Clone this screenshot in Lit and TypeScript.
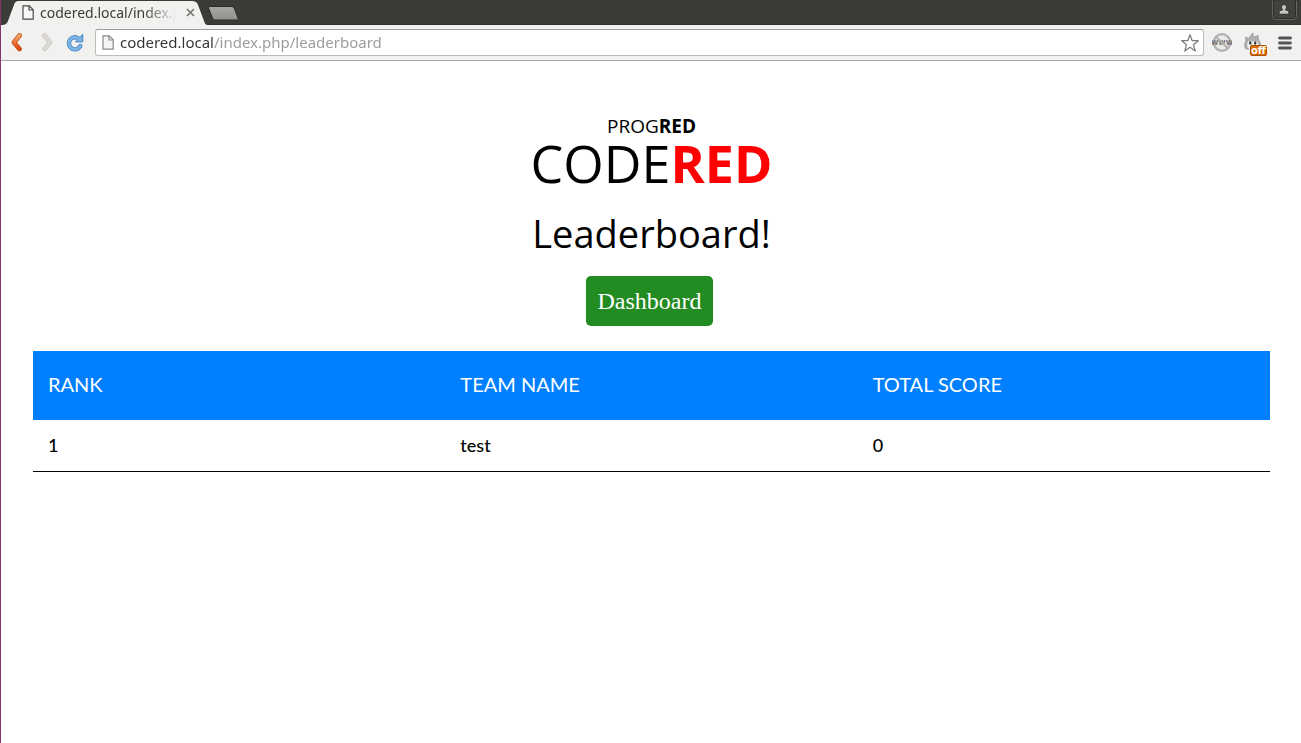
import { LitElement, html, css } from "lit";
import { customElement, property } from "lit/decorators.js";

const pageIcon = (stroke: string, fill: string) => html`
  <svg class="page-icon" viewBox="0 0 12 15" width="12" height="15" aria-hidden="true">
    <path d="M1 .8h6.2l4 4v9.4H1z" fill=${fill} stroke=${stroke} stroke-width="1.2" />
    <path d="M7 .8v4.2h4.2" fill="none" stroke=${stroke} stroke-width="1.2" />
  </svg>`;

@customElement("browser-tabs")
class BrowserTabs extends LitElement {
  @property() label = "";

  static styles = css`
    :host {
      display: block;
      background: #3c3b37;
      font-family: "Noto Sans", "Open Sans", sans-serif;
    }
    .strip {
      display: flex;
      height: 25px;
      align-items: flex-start;
      box-shadow: inset 0 -1px #33322e;
    }
    .tab {
      position: relative;
      display: flex;
      align-items: center;
      width: 207px;
      height: 25px;
      padding: 0 11px 0 21px;
      box-sizing: border-box;
    }
    .shape {
      position: absolute;
      inset: 0;
    }
    .page-icon {
      position: relative;
      flex: none;
    }
    .title {
      position: relative;
      flex: 1;
      margin: 0 9px 0 6px;
      overflow: hidden;
      white-space: nowrap;
      font-size: 14px;
      line-height: 24px;
      color: #3c3b37;
      mask-image: linear-gradient(to right, #000 104px, transparent 136px);
    }
    button {
      position: relative;
      flex: none;
      display: flex;
      padding: 0;
      border: 0;
      background: none;
    }
    .close {
      margin-right: 2px;
    }
    .new {
      margin-top: 6px;
    }
    .user {
      margin: 1px 4px 0 auto;
    }
  `;

  render() {
    return html`
      <div class="strip">
        <div class="tab">
          <svg class="shape" width="207" height="25" viewBox="0 0 208 25" preserveAspectRatio="none" aria-hidden="true">
            <path d="M0 25c4 0 6-1 7-4l6-16c1-3 2-4 5-4h174c3 0 5 1 6 4l6 16c1 3 2 4 4 4z" fill="#f2f1f0" />
          </svg>
          ${pageIcon("#4a4a48", "#f7f7f7")}
          <span class="title">${this.label}</span>
          <button class="close" aria-label="Close tab">
            <svg width="9" height="9" viewBox="0 0 9 9">
              <path d="M1 1l7 7M8 1l-7 7" stroke="#777572" stroke-width="1.6" />
            </svg>
          </button>
        </div>
        <button class="new" aria-label="New tab">
          <svg width="31" height="15" viewBox="0 0 31 15">
            <defs>
              <linearGradient id="g" x2="0" y2="1">
                <stop stop-color="#a9a8a5" /><stop offset="1" stop-color="#92918e" />
              </linearGradient>
            </defs>
            <path d="M2 .5h21c2 0 3 1 3.500 2.500l3.500 9c.5 1.500 0 2-1 2H8c-2 0-3-.5-3.500-2L.7 2.500C.3 1 1 .5 2 .5z" fill="url(#g)" stroke="#2d2c29" />
          </svg>
        </button>
        <button class="user" aria-label="Profile">
          <svg width="25" height="19" viewBox="0 0 25 19">
            <path d="M.5 0v14.500q0 4 4 4h16q4 0 4-4V0" fill="#42413d" stroke="#66655f" />
            <path d="M1.500 0v14.500q0 3 3 3h16q3 0 3-3V0" fill="none" stroke="#2b2a27" />
            <path d="M12 3.500a2.600 2.600 0 0 1 2.600 2.700c0 1.100-.5 1.800-1.200 2.300v.5c2 .3 3.500 1.100 3.500 2.300v1.900H7.100v-1.900c0-1.200 1.500-2 3.500-2.300v-.5c-.7-.5-1.200-1.200-1.200-2.300A2.600 2.600 0 0 1 12 3.500z" fill="#c4c3bf" stroke="#1e1d1b" stroke-width=".8" />
          </svg>
        </button>
      </div>`;
  }
}

@customElement("browser-toolbar")
class BrowserToolbar extends LitElement {
  @property() url = "";

  static styles = css`
    :host {
      display: block;
      background: #f2f1f0;
      border-bottom: 1px solid #a9a8a6;
      font-family: "Noto Sans", "Open Sans", sans-serif;
    }
    .bar {
      display: flex;
      align-items: center;
      height: 35px;
      padding: 0 9px 0 7px;
    }
    button {
      display: flex;
      flex: none;
      padding: 0;
      border: 0;
      background: none;
    }
    .nav {
      display: flex;
      align-items: center;
      gap: 11px;
      margin-right: 11px;
    }
    .field {
      display: flex;
      flex: 1;
      align-items: center;
      gap: 6px;
      height: 27px;
      padding: 0 3px 0 6px;
      box-sizing: border-box;
      background: #fff;
      border: 1px solid #bdbbb8;
      border-top-color: #9f9d9a;
      border-radius: 3px;
    }
    input {
      flex: 1;
      min-width: 0;
      height: 24px;
      padding: 0 0 2px;
      box-sizing: border-box;
      border: 0;
      outline: 0;
      font-family: inherit;
      font-size: 15px;
      color: #333;
      background: linear-gradient(to right, #333 94px, #999 94px);
      background-clip: text;
      -webkit-text-fill-color: transparent;
    }
    .tools {
      display: flex;
      align-items: center;
      gap: 11px;
      margin-left: 8px;
    }
    .badge-text {
      font: bold 10px "DejaVu Sans", sans-serif;
    }
    .www {
      font: bold 8px "DejaVu Sans", sans-serif;
    }
  `;

  render() {
    return html`
      <div class="bar">
        <nav class="nav">
          <button aria-label="Back">
            <svg width="18" height="20" viewBox="0 0 18 20">
              <defs>
                <linearGradient id="o" x2="0" y2="1">
                  <stop stop-color="#f6a568" /><stop offset="1" stop-color="#dd4814" />
                </linearGradient>
              </defs>
              <path d="M11.500 2.500L6 9.500l5.500 6.500" fill="none" stroke="#c4501c" stroke-width="4.800" stroke-linecap="round" stroke-linejoin="round" />
              <path d="M11.500 2.500L6 9.500l5.500 6.500" fill="none" stroke="url(#o)" stroke-width="3.400" stroke-linecap="round" stroke-linejoin="round" />
            </svg>
          </button>
          <button aria-label="Forward" disabled>
            <svg width="18" height="20" viewBox="0 0 18 20">
              <path d="M7.500 2.500L13 9.500l-5.500 6.500" fill="none" stroke="#c9c7c4" stroke-width="4.600" stroke-linecap="round" stroke-linejoin="round" />
              <path d="M7.500 2.500L13 9.500l-5.500 6.500" fill="none" stroke="#dcdad8" stroke-width="3" stroke-linecap="round" stroke-linejoin="round" />
            </svg>
          </button>
          <button aria-label="Reload">
            <svg width="18" height="20" viewBox="0 0 18 20">
              <path d="M12.500 5.500A6 6 0 1 0 14.300 13" fill="none" stroke="#4a86c4" stroke-width="4.400" stroke-linecap="round" />
              <path d="M16.800 1.200v7.700H9.500z" fill="#7db4e6" stroke="#4a86c4" stroke-linejoin="round" />
              <path d="M12.500 5.500A6 6 0 1 0 14.300 13" fill="none" stroke="#7db4e6" stroke-width="2.800" stroke-linecap="round" />
            </svg>
          </button>
        </nav>
        <div class="field">
          ${pageIcon("#8a8a88", "#f4f4f4")}
          <input type="text" aria-label="Address" .value=${this.url} />
          <button aria-label="Bookmark">
            <svg width="20" height="20" viewBox="0 0 20 20">
              <path d="M10 1.700l2.200 6h6.100l-4.800 4 1.800 6.400L10 14.300l-5.300 3.800 1.800-6.400-4.800-4h6.100z" fill="#fff" stroke="#7c7c7a" stroke-width="1.200" stroke-linejoin="round" />
            </svg>
          </button>
        </div>
        <div class="tools">
          <button aria-label="Site blocker">
            <svg width="20" height="20" viewBox="0 0 20 20">
              <circle cx="10" cy="9.500" r="8.300" fill="#ebeae9" stroke="#b3b2b0" stroke-width="2.200" />
              <text class="www" x="10" y="12" text-anchor="middle" fill="#777">www</text>
              <path d="M4 3.700l12 11.800" stroke="#b3b2b0" stroke-width="2" />
            </svg>
          </button>
          <button aria-label="Monkey scripts, off">
            <svg width="24" height="26" viewBox="-1 0 24 26">
              <path d="M2 19C0 16 .5 13 2 11L1.500 7l3 1.500C6 7 6.500 5 9 3c-.3 2 .5 3 1.500 4L14 5.500 14.500 10c2 2 2.500 6 .7 9z" fill="#b0b0b0" stroke="#919191" stroke-width=".8" />
              <path d="M3.500 13c0-2 4-3 5-1 1-2 6-1 5.500 1.500 1 4-1 6.500-5.300 6.500S2.500 17 3.500 13z" fill="#ededed" />
              <ellipse cx="6.300" cy="13" rx="1.200" ry="1.700" fill="#333" />
              <ellipse cx="11.200" cy="13" rx="1.200" ry="1.700" fill="#333" />
              <rect x="6.500" y="15.500" width="16" height="10" rx="1.500" fill="#d96b00" stroke="#a85200" />
              <text class="badge-text" x="14.500" y="24" text-anchor="middle" fill="#fff">off</text>
            </svg>
          </button>
          <button aria-label="Menu">
            <svg width="14" height="14" viewBox="0 0 14 14">
              <path d="M1.500 2h11M1.500 7h11M1.500 12h11" stroke="#555351" stroke-width="2.800" stroke-linecap="round" />
            </svg>
          </button>
        </div>
      </div>`;
  }
}

@customElement("leader-board")
class LeaderBoard extends LitElement {
  @property({ attribute: false }) rows: { rank: number; team: string; score: number }[] = [];

  static styles = css`
    :host {
      display: block;
      font-family: Lato, sans-serif;
    }
    table {
      width: 100%;
      border-collapse: collapse;
      table-layout: fixed;
    }
    th {
      height: 69px;
      padding: 0 15px 3px;
      box-sizing: border-box;
      background: #0080ff;
      color: #fff;
      font-size: 20px;
      font-weight: 400;
      text-align: left;
      text-transform: uppercase;
    }
    td {
      height: 51px;
      padding: 0 15px;
      box-sizing: border-box;
      border-bottom: 1px solid #000;
      font-size: 18px;
      font-weight: 500;
      color: #000;
    }
  `;

  render() {
    return html`
      <table>
        <thead>
          <tr>
            <th scope="col">Rank</th>
            <th scope="col">Team name</th>
            <th scope="col">Total score</th>
          </tr>
        </thead>
        <tbody>
          ${this.rows.map(
            (r) => html`<tr><td>${r.rank}</td><td>${r.team}</td><td>${r.score}</td></tr>`
          )}
        </tbody>
      </table>`;
  }
}

@customElement("app-root")
class AppRoot extends LitElement {
  private rows = [{ rank: 1, team: "test", score: 0 }];

  static styles = css`
    :host {
      display: flex;
      flex-direction: column;
      min-height: 100vh;
      box-sizing: border-box;
      border-left: 1px solid #83356f;
      background: #fff;
      color: #000;
    }
    main {
      padding: 52px 31px 32px 32px;
    }
    header {
      display: flex;
      flex-direction: column;
      align-items: center;
      font-family: "Open Sans", "Noto Sans", sans-serif;
    }
    .brand,
    .logo,
    h1 {
      margin: 0;
      font-weight: 400;
    }
    .brand {
      font-size: 19px;
      line-height: 26px;
    }
    .logo {
      font-size: 52px;
      line-height: 48px;
    }
    .logo b {
      color: #f00;
    }
    h1 {
      margin-top: 20px;
      font-size: 38px;
      line-height: 52px;
    }
    .dash {
      margin: 17px 4px 25px 0;
      padding: 0 12px;
      border-radius: 5px;
      background: #228b22;
      color: #fff;
      font-family: "Liberation Serif", serif;
      font-size: 24px;
      line-height: 50px;
      text-decoration: none;
    }
  `;

  render() {
    return html`
      <browser-tabs label="codered.local/index.php/leaderboard"></browser-tabs>
      <browser-toolbar url="codered.local/index.php/leaderboard"></browser-toolbar>
      <main>
        <header>
          <p class="brand">PROG<b>RED</b></p>
          <p class="logo">CODE<b>RED</b></p>
          <h1>Leaderboard!</h1>
          <a class="dash" href="#dashboard">Dashboard</a>
        </header>
        <leader-board .rows=${this.rows}></leader-board>
      </main>`;
  }
}
